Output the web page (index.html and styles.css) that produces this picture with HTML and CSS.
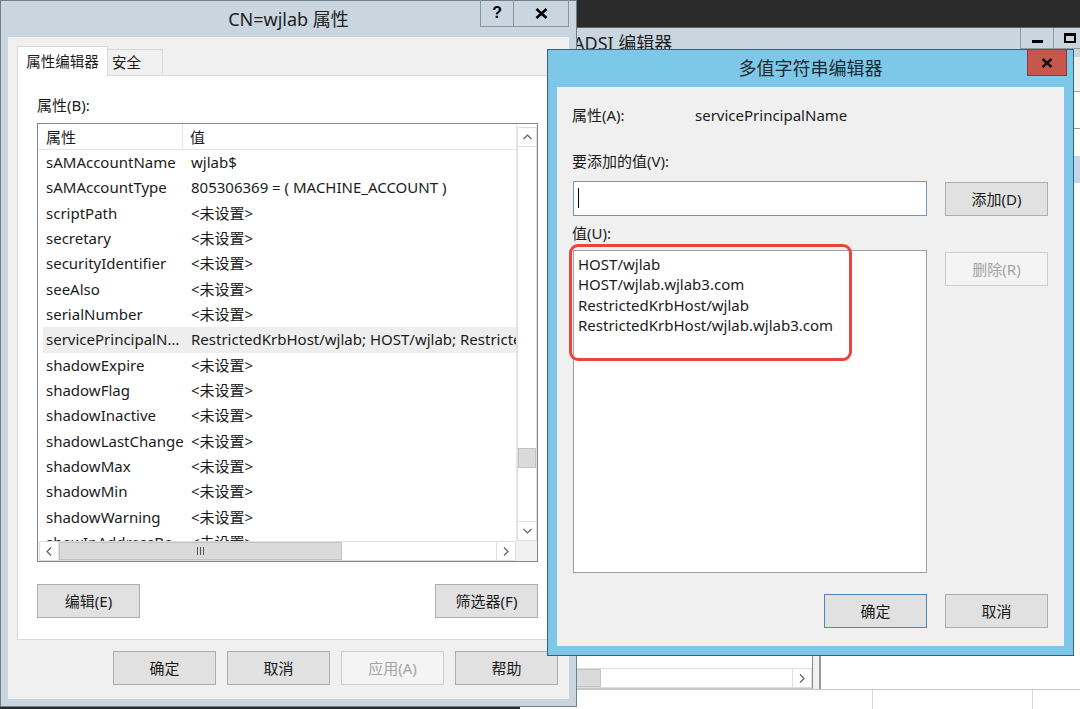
FILE: index.html
```html
<!DOCTYPE html>
<html lang="zh-CN">
<head>
<meta charset="utf-8">
<title>CN=wjlab 属性</title>
<link rel="stylesheet" href="styles.css">
</head>
<body>
<div class="desk">

  <section class="win adsi">
    <header class="adsi-title">
      <span class="adsi-name">ADSI 编辑器</span>
      <div class="caps">
        <span class="cap cap-min"><i class="g-min"></i></span>
        <span class="cap cap-max"><i class="g-max"></i></span>
        <span class="cap cap-wide"></span>
      </div>
    </header>
    <div class="adsi-frame">
      <div class="adsi-menu"></div>
      <div class="adsi-main">
        <div class="tree">
          <div class="tree-body"></div>
          <div class="hscroll tree-scroll">
            <span class="sb-btn"><svg width="6" height="9" viewBox="0 0 6 9"><path d="M5 0.5L1 4.5L5 8.5" fill="none" stroke="#606060" stroke-width="1.2"/></svg></span>
            <div class="sb-track"><span class="sb-thumb tree-thumb"></span></div>
            <span class="sb-btn"><svg width="6" height="9" viewBox="0 0 6 9"><path d="M1 0.5L5 4.5L1 8.5" fill="none" stroke="#606060" stroke-width="1.2"/></svg></span>
          </div>
        </div>
        <div class="splitter"></div>
        <div class="listpane">
          <div class="lp-head"></div>
          <div class="lp-row"></div>
          <div class="lp-row lp-sel"></div>
        </div>
      </div>
      <div class="adsi-status"><span class="st st1"></span><span class="st st2"></span><span class="st st3"></span></div>
    </div>
  </section>

  <section class="win props">
    <header class="titlebar">
      <span class="tb-side"></span>
      <span class="title">CN=wjlab 属性</span>
      <span class="tb-side tb-right">
        <span class="caps">
          <span class="cap cap-help">?</span>
          <span class="cap cap-x"><svg width="13" height="11" viewBox="0 0 13 11"><path d="M1.5 1L11.5 10M11.5 1L1.5 10" fill="none" stroke="#000" stroke-width="2.6"/></svg></span>
        </span>
      </span>
    </header>
    <div class="client">
      <div class="tabs">
        <span class="tab tab-active">属性编辑器</span>
        <span class="tab">安全</span>
      </div>
      <div class="tabpanel">
        <div class="lbl">属性(B):</div>
        <div class="listview">
          <div class="lv-main">
            <div class="lv-head"><span class="h1">属性</span><span class="h2">值</span></div>
            <div class="lv-rows">
              <div class="lv-row"><span class="c1">sAMAccountName</span><span class="c2">wjlab$</span></div>
              <div class="lv-row"><span class="c1">sAMAccountType</span><span class="c2">805306369 = ( MACHINE_ACCOUNT )</span></div>
              <div class="lv-row"><span class="c1">scriptPath</span><span class="c2">&lt;未设置&gt;</span></div>
              <div class="lv-row"><span class="c1">secretary</span><span class="c2">&lt;未设置&gt;</span></div>
              <div class="lv-row"><span class="c1">securityIdentifier</span><span class="c2">&lt;未设置&gt;</span></div>
              <div class="lv-row"><span class="c1">seeAlso</span><span class="c2">&lt;未设置&gt;</span></div>
              <div class="lv-row"><span class="c1">serialNumber</span><span class="c2">&lt;未设置&gt;</span></div>
              <div class="lv-row lv-sel"><span class="c1">servicePrincipalName</span><span class="c2">RestrictedKrbHost/wjlab; HOST/wjlab; RestrictedKrbHost/wjlab.wjlab3.com; HOST/wjlab.wjlab3.com</span></div>
              <div class="lv-row"><span class="c1">shadowExpire</span><span class="c2">&lt;未设置&gt;</span></div>
              <div class="lv-row"><span class="c1">shadowFlag</span><span class="c2">&lt;未设置&gt;</span></div>
              <div class="lv-row"><span class="c1">shadowInactive</span><span class="c2">&lt;未设置&gt;</span></div>
              <div class="lv-row"><span class="c1">shadowLastChange</span><span class="c2">&lt;未设置&gt;</span></div>
              <div class="lv-row"><span class="c1">shadowMax</span><span class="c2">&lt;未设置&gt;</span></div>
              <div class="lv-row"><span class="c1">shadowMin</span><span class="c2">&lt;未设置&gt;</span></div>
              <div class="lv-row"><span class="c1">shadowWarning</span><span class="c2">&lt;未设置&gt;</span></div>
              <div class="lv-row"><span class="c1">showInAddressBook</span><span class="c2">&lt;未设置&gt;</span></div>
            </div>
          </div>
          <div class="vscroll">
            <span class="sb-btn vbtn"><svg width="9" height="6" viewBox="0 0 9 6"><path d="M0.5 5L4.5 1L8.5 5" fill="none" stroke="#606060" stroke-width="1.2"/></svg></span>
            <div class="vtrack"><span class="sb-thumb vthumb"></span></div>
            <span class="sb-btn vbtn"><svg width="9" height="6" viewBox="0 0 9 6"><path d="M0.5 1L4.5 5L8.5 1" fill="none" stroke="#606060" stroke-width="1.2"/></svg></span>
          </div>
          <div class="hscroll lv-hscroll">
            <span class="sb-btn"><svg width="6" height="9" viewBox="0 0 6 9"><path d="M5 0.5L1 4.5L5 8.5" fill="none" stroke="#606060" stroke-width="1.2"/></svg></span>
            <div class="sb-track"><span class="sb-thumb lv-thumb"><svg width="7" height="8" viewBox="0 0 7 8"><path d="M0.5 0V8M3.5 0V8M6.5 0V8" stroke="#555" stroke-width="1"/></svg></span></div>
            <span class="sb-btn"><svg width="6" height="9" viewBox="0 0 6 9"><path d="M1 0.5L5 4.5L1 8.5" fill="none" stroke="#606060" stroke-width="1.2"/></svg></span>
          </div>
          <div class="corner"></div>
        </div>
        <div class="btnrow">
          <button class="btn">编辑(E)</button>
          <button class="btn">筛选器(F)</button>
        </div>
      </div>
      <div class="dlgbtns">
        <button class="btn">确定</button>
        <button class="btn">取消</button>
        <button class="btn" disabled>应用(A)</button>
        <button class="btn">帮助</button>
      </div>
    </div>
  </section>

  <section class="win mv">
    <header class="titlebar mv-title">
      <span class="tb-side"></span>
      <span class="title">多值字符串编辑器</span>
      <span class="tb-side tb-right">
        <span class="caps">
          <span class="cap cap-close"><svg width="12" height="10" viewBox="0 0 12 10"><path d="M1.5 1L10.5 9M10.5 1L1.5 9" fill="none" stroke="#111" stroke-width="2.5"/></svg></span>
        </span>
      </span>
    </header>
    <div class="mv-client">
      <div class="mv-row">
        <span class="mv-key">属性(A):</span>
        <span>servicePrincipalName</span>
      </div>
      <div class="mv-label mv-label-add">要添加的值(V):</div>
      <div class="mv-line mv-line-add">
        <div class="input"><span class="caret"></span></div>
        <button class="btn side-btn">添加(D)</button>
      </div>
      <div class="mv-label">值(U):</div>
      <div class="mv-line">
        <div class="values">
          <div class="val">HOST/wjlab</div>
          <div class="val">HOST/wjlab.wjlab3.com</div>
          <div class="val">RestrictedKrbHost/wjlab</div>
          <div class="val">RestrictedKrbHost/wjlab.wjlab3.com</div>
        </div>
        <button class="btn side-btn del-btn" disabled>删除(R)</button>
      </div>
      <div class="mv-foot">
        <button class="btn btn-default">确定</button>
        <button class="btn">取消</button>
      </div>
      <div class="mark"></div>
    </div>
  </section>

</div>
</body>
</html>
```

FILE: styles.css
```css
* { box-sizing: border-box; margin: 0; padding: 0; }
html, body { width: 1080px; height: 709px; overflow: hidden; }
body {
  background: #2b2b2b;
  font-family: "Noto Sans", "Noto Sans CJK SC", sans-serif;
  font-size: 15px;
  line-height: 20px;
  color: #1b1b1b;
}
.desk { position: relative; width: 1080px; height: 709px; overflow: hidden; }
.win { position: absolute; }

/* generic caption buttons */
.caps { display: flex; }
.cap { display: flex; align-items: center; justify-content: center; }

/* ---------- ADSI background window ---------- */
.adsi {
  left: 520px; top: 27px; width: 613px; height: 702px;
  border-top: 1px solid #56636d;
  background: #c9d6df;
  display: flex; flex-direction: column;
}
.adsi-title { height: 29px; display: flex; justify-content: space-between; align-items: flex-start; }
.adsi-name { padding-left: 53px; font-size: 18px; line-height: 31px; color: #1f1f1f; }
.adsi .cap { height: 21px; border-left: 1px solid #8e9ca7; border-bottom: 1px solid #8e9ca7; }
.cap-min, .cap-max { width: 33px; }
.cap-wide { width: 47px; }
.g-min { display: block; width: 11px; height: 3px; background: #000; margin-top: 6px; }
.g-max { display: block; width: 12px; height: 10px; border: 2px solid #000; border-top-width: 3px; }
.adsi-frame { flex: 1; display: flex; flex-direction: column; background: #f0f0f0; }
.adsi-menu { height: 35px; border-bottom: 1px solid #a9a9a9; }
.adsi-main { flex: 1; display: grid; grid-template-columns: 293px 6px 1fr; min-height: 0; }
.tree { background: #fff; border-right: 1px solid #8c8c8c; border-bottom: 1px solid #c8c8c8; display: flex; flex-direction: column; }
.tree-body { flex: 1; }
.tree-scroll { grid-template-columns: 18px 1fr 19px; height: 21px; }
.tree-thumb { width: 61px; }
.splitter { background: #f0f0f0; }
.listpane { background: #fff; border-left: 2px solid #9a9a9a; }
.lp-head { height: 37px; border-bottom: 1px solid #9b9b9b; }
.lp-row { height: 27px; }
.lp-row:first-of-type { margin-top: 3px; }
.lp-sel { background: #c5d6ec; }
.adsi-status { height: 40px; background: #fff; border-top: 1px solid #c6c6c6; display: flex; }
.st { border-right: 1px solid #d8d8d8; }
.st1 { width: 353px; }
.st2 { width: 160px; }
.st3 { flex: 1; border-right: 0; }

/* ---------- scrollbars ---------- */
.hscroll { display: grid; grid-template-columns: 20px 1fr 20px; height: 20px; background: #fff; }
.sb-btn { display: flex; align-items: center; justify-content: center; border: 1px solid #dedede; background: #fff; }
.sb-track { display: flex; border-top: 1px solid #dedede; border-bottom: 1px solid #dedede; background: #fff; }
.sb-thumb { display: flex; align-items: center; justify-content: center; background: #dadada; border: 1px solid #c3c3c3; }

/* ---------- window shared ---------- */
.titlebar { height: 36px; display: flex; align-items: flex-start; }
.tb-side { flex: 1; display: flex; }
.tb-right { justify-content: flex-end; }
.title { font-size: 18px; line-height: 36px; color: #222; white-space: nowrap; }

.btn {
  width: 103px; height: 34px;
  background: #e1e1e1; border: 1px solid #adadad;
  font: inherit; font-size: 15px; line-height: 20px; color: #1b1b1b;
}
.btn:disabled { background: #f4f4f4; border-color: #cdcdcd; color: #a3a3a3; }
.btn-default { border-color: #4f86c0; }

/* ---------- left properties dialog ---------- */
.props {
  left: 0; top: 0; width: 577px; height: 707px;
  background: #c9d6e0; border: 1px solid #6f808c;
  display: flex; flex-direction: column;
}
.props .caps { margin-top: -1px; margin-right: 7px; }
.props .cap { height: 27px; border: 1px solid #8797a3; border-top: 0; }
.cap-help { width: 34px; font: bold 16px "Liberation Sans", sans-serif; color: #000; }
.props .cap-x { width: 55px; border-left: 0; }

.client {
  flex: 1; margin: 0 7px 7px;
  background: #f0f0f0;
  padding: 9px 10px 0 9px;
}
.tabs { display: flex; align-items: flex-end; height: 30px; margin-bottom: -1px; position: relative; z-index: 1; }
.tab {
  font-size: 14.5px; line-height: 24px;
  border: 1px solid #d9d9d9; border-bottom: 0;
  background: #f0f0f0;
  height: 26px; width: 55px; padding-left: 4px;
  margin-bottom: 1px;
}
.tab-active { background: #fff; height: 30px; width: 91px; padding-left: 0; text-align: center; line-height: 29px; margin-bottom: 0; border-right: 1px solid #d9d9d9; }
.tab-active + .tab { border-left: 0; }

.tabpanel {
  height: 565px; background: #fff; border: 1px solid #d9d9d9;
  padding: 19px 20px 0 19px;
}
.lbl { line-height: 20px; }
.listview {
  margin-top: 8px; width: 501px; height: 439px;
  border: 1px solid #828790;
  display: grid; grid-template-columns: 1fr 21px; grid-template-rows: 1fr 20px;
}
.lv-main { overflow: hidden; min-width: 0; }
.lv-head { height: 26px; display: flex; border-bottom: 1px solid #e5e5e5; line-height: 26px; }
.h1 { width: 145px; padding-left: 8px; border-right: 1px solid #e5e5e5; }
.h2 { padding-left: 7px; }
.lv-rows { overflow: hidden; }
.lv-row { height: 25.35px; line-height: 25.35px; display: flex; margin-left: 5px; white-space: nowrap; }
.c1 { width: 143px; flex: none; padding-left: 3px; overflow: hidden; text-overflow: ellipsis; }
.c2 { flex: 1; padding-left: 5px; overflow: hidden; }
.lv-sel { background: #eeeeee; }

.vscroll { display: flex; flex-direction: column; background: #fff; border-left: 1px solid #e6e6e6; padding-top: 3px; }
.vbtn { height: 20px; flex: none; }
.vtrack { flex: 1; border-left: 1px solid #dedede; border-right: 1px solid #dedede; }
.vthumb { height: 20px; margin-top: 301px; }
.lv-hscroll { padding-left: 1px; grid-template-columns: 20px 1fr 20px; }
.lv-thumb { width: 283px; }
.corner { background: #f0f0f0; }

.btnrow { margin-top: 22px; display: flex; justify-content: space-between; width: 501px; }

.dlgbtns { margin-top: 11px; display: flex; justify-content: flex-end; gap: 11px; padding-right: 1px; }

/* ---------- multi-value string editor ---------- */
.mv {
  left: 547px; top: 49px; width: 527px; height: 607px;
  background: #7dc8e8; border: 1px solid #35627a;
  display: flex; flex-direction: column;
}
.mv-title { height: 37px; }
.mv-title .title { line-height: 37px; color: #1d2a33; }
.mv .caps { margin-right: 6px; }
.cap-close { width: 40px; height: 26px; background: #c7564d; border: 1px solid #8a3a33; border-top: 0; }

.mv-client {
  position: relative;
  flex: 1; margin: 0 9px 9px 9px;
  background: #f0f0f0;
  padding: 18px 16px 0 15px;
}
.mv-row { display: flex; line-height: 20px; }
.mv-key { width: 123px; }
.mv-label { margin-top: 7px; }
.mv-label-add { margin-top: 26px; }
.mv-line { display: flex; align-items: flex-start; gap: 18px; margin-top: 7px; padding-left: 1px; }
.mv-line-add { margin-top: 10px; }
.input { width: 354px; height: 35px; background: #fff; border: 1px solid #6f96c6; }
.caret { display: block; width: 1px; height: 20px; background: #000; margin: 6px 0 0 4px; }
.side-btn { margin-top: 1px; }
.del-btn { margin-top: 2px; }
.values { width: 354px; height: 323px; background: #fff; border: 1px solid #a0a0a0; padding: 3px 4px; }
.val { line-height: 20.33px; white-space: nowrap; }
.mv-foot { display: flex; justify-content: flex-end; gap: 18px; margin-top: 21px; }
.mark {
  position: absolute; left: 12px; top: 157px;
  width: 283px; height: 117px;
  border: 3px solid #e8453c; border-radius: 9px;
}
```
